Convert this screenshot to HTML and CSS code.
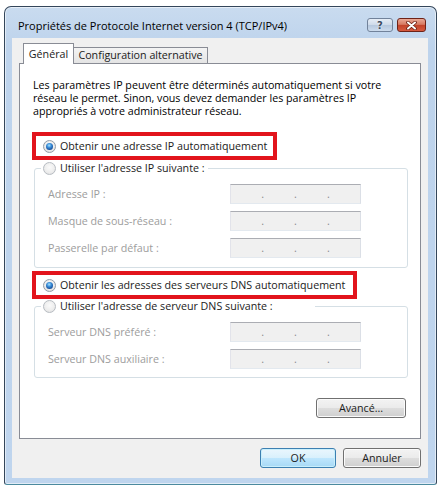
FILE: index.html
```html
<!DOCTYPE html>
<html lang="fr">
<head>
<meta charset="utf-8">
<title>Propriétés de Protocole Internet version 4 (TCP/IPv4)</title>
<link rel="stylesheet" href="styles.css">
</head>
<body>
<div class="window">
  <div class="titlebar">
    <span class="title">Propriétés de Protocole Internet version 4 (TCP/IPv4)</span>
    <div class="caption-buttons">
      <span class="cbtn help">?</span>
      <span class="cbtn close">
        <svg width="11" height="9" viewBox="0 0 11 9" aria-hidden="true">
          <path d="M2 1.5 L9 7.5 M9 1.5 L2 7.5" stroke="#6a2014" stroke-width="3.6" stroke-linecap="round" fill="none"/>
          <path d="M2 1.5 L9 7.5 M9 1.5 L2 7.5" stroke="#ffffff" stroke-width="2" stroke-linecap="round" fill="none"/>
        </svg>
      </span>
    </div>
  </div>
  <div class="client">
    <div class="tabs">
      <span class="tab active">Général</span>
      <span class="tab">Configuration alternative</span>
    </div>
    <div class="panel">
      <p class="intro">Les paramètres IP peuvent être déterminés automatiquement si votre<br>réseau le permet. Sinon, vous devez demander les paramètres IP<br>appropriés à votre administrateur réseau.</p>

      <div class="highlight hl-ip">
        <label class="option"><span class="radio checked"></span>Obtenir une adresse IP automatiquement</label>
      </div>

      <fieldset class="group group-ip">
        <legend><span class="radio"></span>Utiliser l'adresse IP suivante :</legend>
        <div class="fields">
          <span class="label">Adresse IP :</span>
          <span class="ipfield"><i>.</i><i>.</i><i>.</i></span>
          <span class="label">Masque de sous-réseau :</span>
          <span class="ipfield"><i>.</i><i>.</i><i>.</i></span>
          <span class="label">Passerelle par défaut :</span>
          <span class="ipfield"><i>.</i><i>.</i><i>.</i></span>
        </div>
      </fieldset>

      <div class="highlight hl-dns">
        <label class="option"><span class="radio checked"></span>Obtenir les adresses des serveurs DNS automatiquement</label>
      </div>

      <fieldset class="group group-dns">
        <legend><span class="radio"></span>Utiliser l'adresse de serveur DNS suivante :</legend>
        <div class="fields">
          <span class="label">Serveur DNS préféré :</span>
          <span class="ipfield"><i>.</i><i>.</i><i>.</i></span>
          <span class="label">Serveur DNS auxiliaire :</span>
          <span class="ipfield"><i>.</i><i>.</i><i>.</i></span>
        </div>
      </fieldset>

      <div class="panel-actions">
        <button class="btn btn-advanced">Avancé...</button>
      </div>
    </div>
    <div class="dialog-actions">
      <button class="btn btn-ok default">OK</button>
      <button class="btn btn-cancel">Annuler</button>
    </div>
  </div>
</div>
</body>
</html>
```
FILE: styles.css
```css
* { box-sizing: border-box; }

html, body { margin: 0; }

body {
  background: #ffffff;
  font-family: "Open Sans", "Noto Sans", sans-serif;
  font-size: 10.7px;
  line-height: 13px;
  color: #1b1b1b;
}

.window {
  margin: 6px 0 0 4px;
  width: 433px;
  height: 479px;
  border: 1px solid #34465a;
  border-bottom-color: #4b8a9e;
  border-radius: 7px 7px 3px 3px;
  background: linear-gradient(#c9dbef 0, #bdd3ec 40px, #bfd5ee 100%);
  box-shadow: inset 0 0 0 1px rgba(255, 255, 255, 0.55);
  padding: 0 8px 6px 7px;
  display: flex;
  flex-direction: column;
}

.titlebar {
  height: 31px;
  display: flex;
  align-items: flex-start;
  flex: none;
}

.title {
  margin: 12px 0 0 6px;
  font-size: 11px;
  color: #000000;
  white-space: nowrap;
}

.caption-buttons {
  margin: 11px 2px 0 auto;
  display: flex;
  gap: 4px;
}

.cbtn {
  height: 14px;
  border-radius: 3px;
  display: flex;
  align-items: center;
  justify-content: center;
}

.cbtn.help {
  width: 26px;
  border: 1px solid #71829a;
  background: linear-gradient(#e6edf6 0%, #cfdbea 48%, #b6c8de 52%, #cddcee 100%);
  color: #3c4c62;
  font-family: "DejaVu Sans", sans-serif;
  font-weight: bold;
  font-size: 10px;
  text-shadow: 0 0 2px #ffffff;
}

.cbtn.close {
  width: 29px;
  border: 1px solid #6e2318;
  background: linear-gradient(#eaa895 0%, #d77a63 45%, #c2432a 52%, #d65a3f 100%);
}

.client {
  flex: none;
  height: 440px;
  background: #f0f0f0;
  padding: 5px 7px 10px 7px;
  display: flex;
  flex-direction: column;
}

.tabs {
  display: flex;
  align-items: flex-end;
  height: 21px;
  padding-left: 4px;
  margin-bottom: -1px;
  position: relative;
  z-index: 1;
  flex: none;
}

.tab {
  border: 1px solid #898c95;
  border-bottom: none;
  display: flex;
  align-items: center;
  justify-content: center;
  white-space: nowrap;
}

.tab.active {
  width: 51px;
  height: 21px;
  background: #ffffff;
  position: relative;
  z-index: 1;
}

.tab:not(.active) {
  width: 135px;
  height: 16px;
  margin: 0 0 1px -1px;
  background: linear-gradient(#f4f4f4, #e4e4e4);
}

.panel {
  flex: none;
  height: 376px;
  border: 1px solid #898c95;
  background: #ffffff;
  display: flex;
  flex-direction: column;
  align-items: stretch;
}

.intro {
  margin: 15px 0 0 13px;
  color: #000000;
}

.highlight {
  align-self: flex-start;
  margin-left: 12px;
  border: 4px solid #e2141c;
  padding: 4px 6px 3px 7px;
}

.hl-ip { margin-top: 14px; }
.hl-dns { margin-top: 3px; padding-right: 8px; }

.option, legend {
  display: flex;
  align-items: center;
  gap: 4px;
  white-space: nowrap;
  color: #1b1b1b;
}

.radio {
  flex: none;
  width: 13px;
  height: 13px;
  border-radius: 50%;
  border: 1px solid #939ca6;
  background: radial-gradient(circle at 50% 40%, #ffffff 0, #ececec 55%, #d2d2d2 100%);
  position: relative;
}

legend .radio {
  border-color: #b7bcc2;
  background: radial-gradient(circle at 50% 40%, #fafafa 0, #eeeeee 55%, #dcdcdc 100%);
}

.radio.checked::after {
  content: "";
  position: absolute;
  inset: 2px;
  border-radius: 50%;
  background: radial-gradient(circle at 45% 35%, #a8e4ff 0, #3d90da 35%, #0b3b87 85%);
}

.group {
  margin: 2px 12px 0 14px;
  padding: 0 0 9px 0;
  border: 1px solid #d5dfe5;
  border-radius: 3px;
  min-width: 0;
}

.group legend {
  margin-left: 6px;
  padding: 0 3px 0 2px;
}

.group-dns { margin-top: 1px; padding-bottom: 8px; }
.group-dns legend { padding-right: 42px; }

.fields {
  display: grid;
  grid-template-columns: 182px 131px;
  row-gap: 7px;
  align-items: center;
  padding: 9px 0 0 13px;
}

.label {
  color: #9d9d9d;
  white-space: nowrap;
}

.ipfield {
  height: 20px;
  border: 1px solid;
  border-color: #abadb3 #dbdfe6 #e3e9ef #e2e3ea;
  background: #f0f0f0;
  display: flex;
  justify-content: space-evenly;
  align-items: center;
  color: #8c8c8c;
}

.ipfield i {
  font-style: normal;
}

.panel-actions {
  display: flex;
  justify-content: flex-end;
  margin: 20px 14px 0 0;
}

.btn {
  font: inherit;
  color: #1b1b1b;
  height: 20px;
  padding: 0;
  border: 1px solid #707070;
  border-radius: 3px;
  background: linear-gradient(#f3f3f3 0%, #ebebeb 48%, #dddddd 52%, #cfcfcf 100%);
  box-shadow: inset 0 0 0 1px #fbfbfb;
}

.btn-advanced { width: 90px; }

.dialog-actions {
  display: flex;
  justify-content: flex-end;
  gap: 7px;
  margin-top: 9px;
  flex: none;
}

.btn-ok { width: 76px; }
.btn-cancel { width: 78px; }

.btn.default {
  border-color: #3c7fb1;
  background: linear-gradient(#eaf6fd 0%, #d9f0fc 48%, #bee6fd 52%, #a7d9f5 100%);
  box-shadow: inset 0 0 0 1px #c9effc;
}
```
